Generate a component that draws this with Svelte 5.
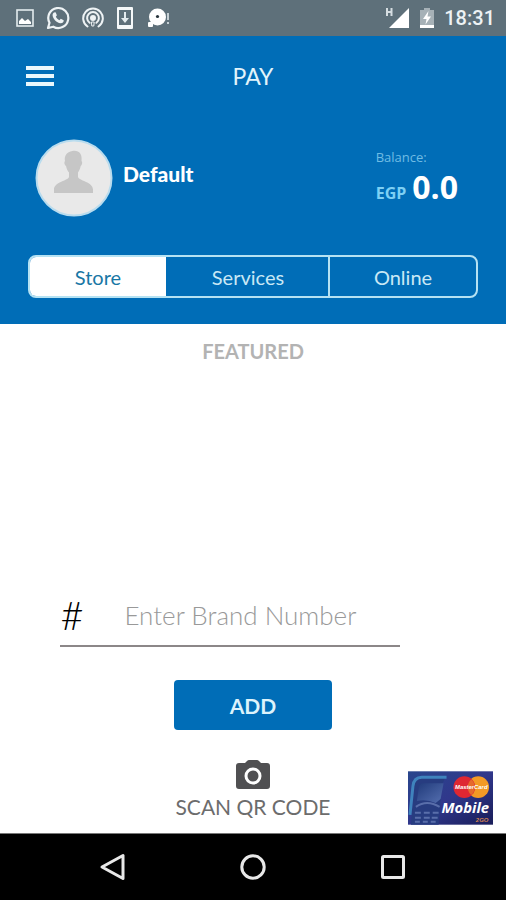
<script lang="ts">
  const tabs = ['Store', 'Services', 'Online']

  let activeTab = $state('Store')
  let brandNumber = $state('')
</script>

<div class="screen">
  <div class="status-bar">
    <div class="notifications">
      <svg width="18" height="18" viewBox="0 0 18 18" aria-hidden="true">
        <rect x="1" y="1" width="16" height="16" fill="none" stroke="#e3ebee" stroke-width="1.6" />
        <path d="M3 15v-3l3-3 3 3 3-2 3 3v2z" fill="#fff" />
      </svg>
      <svg width="24" height="24" viewBox="0 0 24 24" aria-hidden="true">
        <path d="M2 22l1.5-5.2A10 10 0 1 1 7.300 20.700z" fill="none" stroke="#eef3f5" stroke-width="2.200" stroke-linejoin="round" />
        <path d="M8 6.500l1.600-.2 1.300 3-1.100 1.500c.8 1.600 2 2.700 3.600 3.400l1.400-1.400 2.900 1.400c.2 2-1.500 3.200-3.200 3C10.500 16.800 7 13 6.600 9.500c-.1-1.300.5-2.400 1.400-3z" fill="#eef3f5" />
      </svg>
      <svg width="22" height="22" viewBox="0 0 22 22" fill="none" stroke="#eef3f5" stroke-width="2" stroke-linecap="round" aria-hidden="true">
        <path d="M5.500 19.500a9.800 9.800 0 1 1 11 0" />
        <path d="M7.600 15.800a5.900 5.900 0 1 1 6.800 0" />
        <circle cx="11" cy="11" r="2" fill="#eef3f5" />
        <path d="M9.800 15h2.400l-.4 4h-1.600z" stroke-width="1" />
      </svg>
      <svg width="18" height="24" viewBox="0 0 18 24" aria-hidden="true">
        <path fill-rule="evenodd" d="M2 1h14a1 1 0 0 1 1 1v20a1 1 0 0 1-1 1H2a1 1 0 0 1-1-1V2a1 1 0 0 1 1-1zm1 3v15h12V4z" fill="#f5f8f9" />
        <path d="M8 6h2v6h3l-4 5-4-5h3z" fill="#e3ebee" />
      </svg>
      <svg width="24" height="22" viewBox="0 0 24 22" aria-hidden="true">
        <circle cx="11.500" cy="10" r="8.500" fill="#fff" />
        <rect x="2" y="15" width="5" height="5" rx="1" fill="#fff" />
        <circle cx="11.500" cy="9.500" r="1.600" fill="#26333a" />
        <path d="M22 6v7M22 15v2" stroke="#c6d0d5" stroke-width="2" />
      </svg>
    </div>
    <div class="system">
      <svg width="26" height="24" viewBox="0 0 26 24" aria-hidden="true">
        <path d="M3 2v8M7.500 2v8M3 6h4.500" stroke="#d5dde1" stroke-width="2" fill="none" />
        <path d="M5 22L25 2v20z" fill="#fff" />
      </svg>
      <svg width="16" height="22" viewBox="0 0 16 22" aria-hidden="true">
        <path d="M1 3h4V1h6v2h4v18H1z" fill="#a6b1b7" />
        <path d="M1 18h14v3H1z" fill="#fff" />
        <path d="M9.500 4L4 12h3.500l-1 5.500L12 9.500H8.500z" fill="#fff" />
      </svg>
      <span class="clock">18:31</span>
    </div>
  </div>

  <header>
    <div class="title-bar">
      <button class="menu" aria-label="Menu">
        <svg width="28" height="20" viewBox="0 0 28 20" fill="#e9f7fc" aria-hidden="true">
          <path d="M0 0h28v4H0zM0 8h28v4H0zM0 16h28v4H0z" />
        </svg>
      </button>
      <h1>PAY</h1>
    </div>

    <div class="account">
      <svg class="avatar" width="78" height="78" viewBox="0 0 78 78" aria-hidden="true">
        <circle cx="39" cy="39" r="37.500" fill="#e9e9e9" stroke="#b9dcee" stroke-width="2" />
        <path d="M37.500 12c6.500-1 10 3 9 10 1.300 1 .6 4-.8 5-.6 3-1.600 5-2.700 6.500v4.500c1.500 4 15 5 15 12.500V54H19v-3.500C19 43 32.500 42 34 38v-4.500C32.600 32 31.600 30 31 27c-1.600-1-2.200-4-1-5-1-5 1.500-9 7.500-10z" fill="#c6c6c6" />
      </svg>
      <span class="name">Default</span>
      <div class="balance">
        <span class="label">Balance:</span>
        <div class="amount"><span class="currency">EGP</span><strong>0.0</strong></div>
      </div>
    </div>

    <div class="tabs">
      {#each tabs as tab}
        <button class="tab" class:active={activeTab === tab} aria-pressed={activeTab === tab} onclick={() => (activeTab = tab)}>{tab}</button>
      {/each}
    </div>
  </header>

  <main>
    <h2>FEATURED</h2>

    <div class="brand">
      <label for="brand-number">#</label>
      <input id="brand-number" type="text" placeholder="Enter Brand Number" bind:value={brandNumber} />
    </div>
    <button class="add">ADD</button>

    <div class="bottom">
      <button class="scan">
        <svg width="36" height="32" viewBox="0 0 36 32" aria-hidden="true">
          <path d="M4 4h6l2-2q1-1 2-1h8q1 0 2 1l2 2h6q3 0 3 3v20q0 3-3 3H4q-3 0-3-3V7q0-3 3-3z" fill="#505052" />
          <circle cx="18" cy="17" r="7" fill="none" stroke="#fff" stroke-width="3" />
        </svg>
        SCAN QR CODE
      </button>

      <svg class="card" width="85" height="54" viewBox="0 0 86 54" role="img" aria-label="MasterCard Mobile">
        <defs>
          <linearGradient id="card-bg" x1="0" y1="0" x2="1" y2="1">
            <stop offset="0" stop-color="#29468d" />
            <stop offset="0.5" stop-color="#30378b" />
            <stop offset="1" stop-color="#191d59" />
          </linearGradient>
          <linearGradient id="phone-screen" x1="0" y1="0" x2="1" y2="1">
            <stop offset="0" stop-color="#213b7b" />
            <stop offset="1" stop-color="#556fb0" />
          </linearGradient>
        </defs>
        <rect width="86" height="54" fill="url(#card-bg)" />
        <path d="M3 54l3-40q1-8 8-8h24q-3 4-4 12l-3 36z" fill="#273c80" />
        <path d="M2 44l3-29q1-9 9-9h25" fill="none" stroke="#3f83bd" stroke-width="3" />
        <path d="M9 30l2-14q1-4 5-4h20l-3 16-5 4q-9-4-19-2z" fill="url(#phone-screen)" />
        <path d="M8 36q11-8 24 0M7 42h6M16 42h6M25 42h6M7 47h6M16 47h6M24 47h6M7 51h5M15 51h5M23 51h5" fill="none" stroke="#596eaa" stroke-width="2" />
        <circle cx="71" cy="16" r="11" fill="#f39a25" />
        <circle cx="57" cy="16" r="11" fill="#df2732" />
        <path d="M64 8a11 11 0 0 1 0 16a11 11 0 0 1 0-16z" fill="#e66a2c" />
        <text x="64" y="18" text-anchor="middle" class="card-brand">MasterCard</text>
        <text x="58" y="42" text-anchor="middle" class="card-mobile">Mobile</text>
        <text x="75" y="51" text-anchor="middle" class="card-small">2GO</text>
      </svg>
    </div>
  </main>

  <nav>
    <button aria-label="Back">
      <svg width="28" height="28" viewBox="0 0 28 28" aria-hidden="true"><path d="M24 2.500v23L3 14z" /></svg>
    </button>
    <button aria-label="Home">
      <svg width="28" height="28" viewBox="0 0 28 28" aria-hidden="true"><circle cx="14" cy="14" r="11.200" /></svg>
    </button>
    <button aria-label="Recent apps">
      <svg width="28" height="28" viewBox="0 0 28 28" aria-hidden="true"><rect x="3.500" y="3.500" width="21" height="21" rx="1" /></svg>
    </button>
  </nav>
</div>

<style>
  :global(body) {
    margin: 0;
  }

  .screen {
    display: flex;
    flex-direction: column;
    min-height: 100vh;
    background: #fff;
    font-family: Lato, sans-serif;
  }

  button {
    border: none;
    padding: 0;
    background: none;
    font-family: inherit;
    cursor: pointer;
  }

  svg {
    display: block;
  }

  .status-bar {
    display: flex;
    justify-content: space-between;
    align-items: center;
    height: 36px;
    padding: 0 11px 0 16px;
    box-sizing: border-box;
    background: #5e707a;
  }

  .notifications {
    display: flex;
    align-items: center;
    gap: 12px;
  }

  .system {
    display: flex;
    align-items: center;
    gap: 9px;
  }

  .clock {
    color: #edf2f4;
    font: 500 20px/24px Roboto, sans-serif;
  }

  header {
    padding: 0 28px 26px;
    background: #006db7;
    color: #fff;
  }

  .title-bar {
    display: grid;
    grid-template-columns: 28px 1fr 28px;
    align-items: center;
    height: 80px;
    margin: 0 -2px;
  }

  h1 {
    margin: 0;
    text-align: center;
    color: #e2f4fb;
    font-size: 23px;
    font-weight: 400;
    line-height: 28px;
  }

  .account {
    display: flex;
    align-items: center;
    padding: 23px 20px 38px 7px;
  }

  .name {
    margin-left: 10px;
    padding-bottom: 8px;
    font-size: 21px;
    font-weight: 900;
    line-height: 24px;
  }

  .balance {
    margin-left: auto;
    padding-top: 8px;
    font-family: 'Open Sans', sans-serif;
  }

  .label {
    display: block;
    color: #6fbce4;
    font-size: 13px;
    line-height: 16px;
  }

  .amount {
    display: flex;
    align-items: baseline;
    gap: 6px;
    line-height: 44px;
  }

  .currency {
    color: #7dd0f4;
    font-size: 16px;
    font-weight: 700;
  }

  .amount strong {
    font-size: 32px;
    font-weight: 700;
  }

  .tabs {
    display: grid;
    grid-template-columns: 136fr 162fr 148fr;
    overflow: hidden;
    border: 2px solid #b5e2f3;
    border-radius: 8px;
  }

  .tab {
    height: 39px;
    color: #c9e8f5;
    font-size: 20px;
    line-height: 24px;
  }

  .tab + .tab {
    border-left: 2px solid #b5e2f3;
  }

  .tab.active {
    background: #fff;
    color: #1877a5;
  }

  .tab.active + .tab {
    border-left-color: #006db7;
  }

  main {
    display: flex;
    flex: 1;
    flex-direction: column;
    align-items: center;
  }

  h2 {
    margin: 15px 0 40px;
    color: #b3b3b3;
    font-size: 20px;
    font-weight: 700;
    line-height: 24px;
  }

  .brand {
    display: flex;
    align-items: center;
    width: 67%;
    height: 62px;
    margin: auto 46px 33px 0;
    box-sizing: border-box;
    border-bottom: 2px solid #8c8788;
  }

  .brand label {
    width: 64px;
    color: #000;
    font-size: 40px;
    font-weight: 300;
    line-height: 48px;
  }

  .brand input {
    flex: 1;
    min-width: 0;
    border: none;
    padding: 0;
    outline: none;
    background: none;
    color: #444;
    font: 300 26px/32px Lato, sans-serif;
  }

  .brand input::placeholder {
    color: #999;
    opacity: 1;
  }

  .add {
    width: 158px;
    height: 50px;
    border-radius: 4px;
    background: #006db7;
    color: #dcf3fc;
    font-size: 21px;
    font-weight: 700;
  }

  .bottom {
    display: grid;
    grid-template-columns: 1fr auto 1fr;
    width: 100%;
    padding: 29px 13px 8px;
    box-sizing: border-box;
  }

  .scan {
    display: flex;
    grid-column: 2;
    flex-direction: column;
    align-items: center;
    align-self: start;
    gap: 4px;
    color: #6c6c6c;
    font-size: 21px;
    line-height: 24px;
  }

  .card {
    align-self: end;
    justify-self: end;
    margin-top: 12px;
  }

  .card-brand {
    fill: #fff;
    font: italic 700 6px 'Liberation Sans', sans-serif;
  }

  .card-mobile {
    fill: #fff;
    font: italic 700 15px 'Open Sans', sans-serif;
  }

  .card-small {
    fill: #d88650;
    font: italic 700 6px 'Liberation Sans', sans-serif;
  }

  nav {
    display: flex;
    justify-content: center;
    gap: 112px;
    height: 66px;
    border-top: 1px solid #777;
    background: #000;
  }

  nav svg {
    fill: none;
    stroke: #e8e8e8;
    stroke-width: 3;
    stroke-linejoin: round;
  }
</style>
